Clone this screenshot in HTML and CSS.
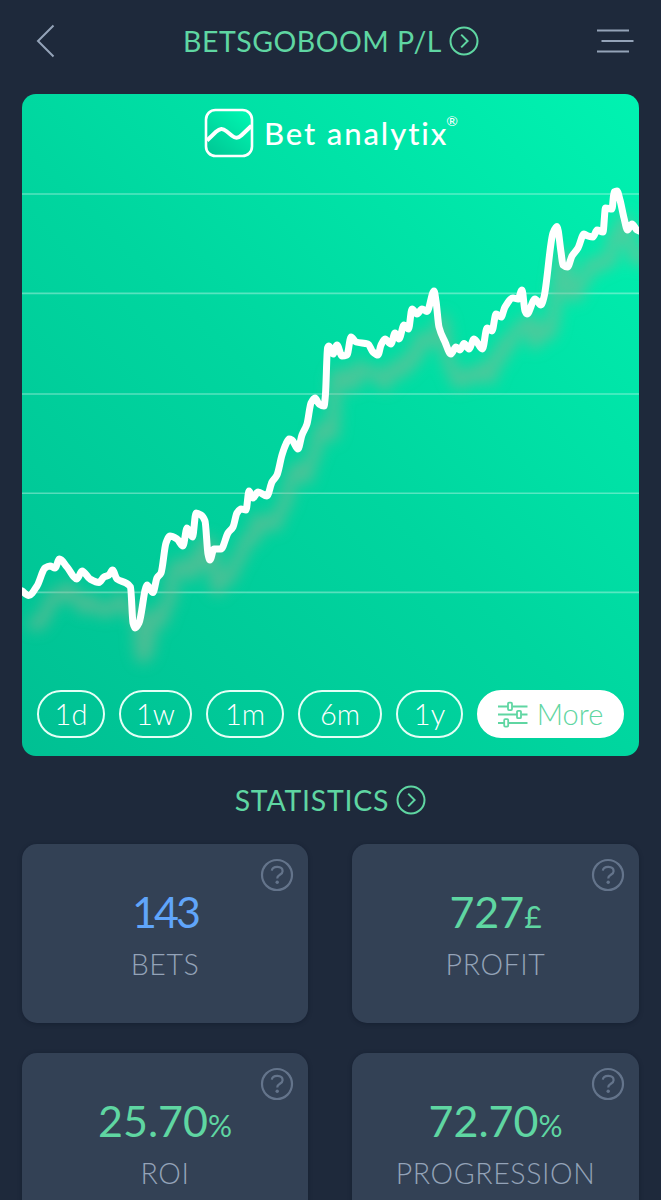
FILE: index.html
```html
<!DOCTYPE html>
<html lang="en">
<head>
  <meta charset="UTF-8" />
  <meta name="viewport" content="width=device-width, initial-scale=1.0" />
  <title>Bet analytix</title>
  <link rel="stylesheet" href="styles.css">
</head>
<body>
  <!-- Top bar -->
  <header class="top-bar">
    <svg class="back" width="20" height="36" viewBox="0 0 20 36"><path d="M17.5 2.5 L2 18 L17.5 33.5" /></svg>
    <h1 class="title">
      <span class="title-text">BETSGOBOOM P/L</span>
      <svg class="go" width="30" height="30" viewBox="0 0 30 30"><circle cx="15" cy="15" r="13.5" /><path d="M12.2 8.6 L18.6 15 L12.2 21.4" /></svg>
    </h1>
    <svg class="menu" width="38" height="26" viewBox="0 0 38 26"><path d="M1 2.5 H33 M5.5 13 H37.5 M1 23.5 H33" /></svg>
  </header>

  <!-- Profit chart -->
  <section class="chart-card">
    <svg class="chart" width="617" height="662" viewBox="0 0 617 662">
      <defs>
        <filter id="soft" x="-10%" y="-10%" width="120%" height="120%">
          <feGaussianBlur stdDeviation="7" />
        </filter>
      </defs>
      <path class="grid-line" d="M0 100 H617 M0 199.4 H617 M0 300 H617 M0 399.2 H617 M0 498.4 H617" />
      <path class="line-shadow" id="lineShadow" filter="url(#soft)" />
      <path class="line" id="line" />
    </svg>
    <div class="brand">
      <svg class="brand-icon" width="50" height="50" viewBox="0 0 50 50">
        <defs>
          <linearGradient id="logoFill" x1="0" y1="1" x2="0.8" y2="0">
            <stop offset="0" stop-color="#00c493" />
            <stop offset="1" stop-color="#00f5b0" />
          </linearGradient>
        </defs>
        <rect x="2" y="2" width="46" height="46" rx="9.5" fill="url(#logoFill)" />
        <path d="M3 32.5 L12 23.8 C16 20.3 18.5 20 22.5 23.2 L28 27.8 C31.5 30.6 34 30.6 37.5 27.3 L47.5 17.8" />
      </svg>
      <span class="brand-name">Bet analytix</span>
      <span class="brand-mark">®</span>
    </div>
    <nav class="ranges">
      <button class="range">1d</button>
      <button class="range">1w</button>
      <button class="range">1m</button>
      <button class="range">6m</button>
      <button class="range">1y</button>
      <button class="range more">
        <svg width="30" height="27" viewBox="0 0 30 27">
          <path d="M0 5.5 H10 M14.5 5.5 H29.5 M0 13.5 H19 M23.5 13.5 H29.5 M0 22 H6 M10.5 22 H29.5" />
          <rect x="10" y="1.7" width="4" height="7.4" rx="1" />
          <rect x="19" y="9.8" width="4" height="7.4" rx="1" />
          <rect x="6.2" y="18.2" width="4" height="7.4" rx="1" />
        </svg>
        <span>More</span>
      </button>
    </nav>
  </section>

  <!-- Statistics -->
  <h2 class="title stats-title">
    <span class="title-text">STATISTICS</span>
    <svg class="go" width="30" height="30" viewBox="0 0 30 30"><circle cx="15" cy="15" r="13.5" /><path d="M12.2 8.6 L18.6 15 L12.2 21.4" /></svg>
  </h2>
  <section class="stats">
    <div class="stat">
      <svg class="help" width="34" height="34" viewBox="0 0 34 34"><circle cx="17" cy="17" r="15" /><path d="M11.8 12.7 C12.5 7.6 22.6 7.6 22.6 13.2 C22.6 17 17.2 16.6 17.2 20.4" /><circle class="dot" cx="17.2" cy="24.2" r="1.7" /></svg>
      <div class="value blue">143</div>
      <div class="label">BETS</div>
    </div>
    <div class="stat">
      <svg class="help" width="34" height="34" viewBox="0 0 34 34"><circle cx="17" cy="17" r="15" /><path d="M11.8 12.7 C12.5 7.6 22.6 7.6 22.6 13.2 C22.6 17 17.2 16.6 17.2 20.4" /><circle class="dot" cx="17.2" cy="24.2" r="1.7" /></svg>
      <div class="value">727<span class="unit">£</span></div>
      <div class="label">PROFIT</div>
    </div>
    <div class="stat">
      <svg class="help" width="34" height="34" viewBox="0 0 34 34"><circle cx="17" cy="17" r="15" /><path d="M11.8 12.7 C12.5 7.6 22.6 7.6 22.6 13.2 C22.6 17 17.2 16.6 17.2 20.4" /><circle class="dot" cx="17.2" cy="24.2" r="1.7" /></svg>
      <div class="value">25.70<span class="unit">%</span></div>
      <div class="label">ROI</div>
    </div>
    <div class="stat">
      <svg class="help" width="34" height="34" viewBox="0 0 34 34"><circle cx="17" cy="17" r="15" /><path d="M11.8 12.7 C12.5 7.6 22.6 7.6 22.6 13.2 C22.6 17 17.2 16.6 17.2 20.4" /><circle class="dot" cx="17.2" cy="24.2" r="1.7" /></svg>
      <div class="value">72.70<span class="unit">%</span></div>
      <div class="label">PROGRESSION</div>
    </div>
  </section>
  <script src="chart.js"></script>
</body>
</html>
```
FILE: styles.css
```css
:root {
  --background: #1e293b;
  --card: #334155;
  --green: #5fd6a2;
  --blue: #60a5fa;
  --muted: #94a3b8;
}
* {
  margin: 0;
  padding: 0;
  box-sizing: border-box;
  font-family: Lato, 'Liberation Sans', sans-serif;
}
body {
  height: 1200px;
  background: var(--background);
  overflow: hidden;
}
svg {
  display: block;
  fill: none;
  flex-shrink: 0;
}
/* Top bar */
.top-bar {
  height: 94px;
  padding: 0 27px 12px 36px;
  display: flex;
  align-items: center;
  justify-content: space-between;
}
.back path,
.menu path {
  stroke: var(--muted);
  stroke-width: 2;
}
.title {
  display: flex;
  align-items: center;
  justify-content: center;
  gap: 7px;
  color: var(--green);
  font-size: 28.5px;
  font-weight: 400;
  line-height: 36px;
  white-space: nowrap;
}
.top-bar .title {
  margin-left: 10px;
}
.top-bar .title-text {
  letter-spacing: 0.5px;
}
.stats-title .title-text {
  letter-spacing: 0.75px;
}
.go {
  stroke: var(--green);
  stroke-width: 2;
}
/* Chart card */
.chart-card {
  position: relative;
  height: 662px;
  margin: 0 22px;
  border-radius: 14px;
  background: linear-gradient(45deg, #00c093, #00d69f 48%, #00f3b1);
  overflow: hidden;
  display: flex;
  flex-direction: column;
  justify-content: space-between;
}
/* the plot fills the card behind the logo and the buttons */
.chart {
  position: absolute;
  top: 0;
  left: 0;
}
.grid-line {
  stroke: rgba(255, 255, 255, 0.34);
  stroke-width: 1.6;
}
.line {
  stroke: #fff;
  stroke-width: 7;
  stroke-linejoin: round;
  stroke-linecap: round;
}
.line-shadow {
  stroke: rgba(140, 180, 145, 0.52);
  stroke-width: 13;
  stroke-linejoin: round;
  transform: translate(8px, 29px);
}
.brand {
  position: relative;
  display: flex;
  align-items: center;
  margin: 14px 0 0 182px;
  color: #fff;
}
.brand-icon {
  stroke: #fff;
  stroke-width: 2.6;
}
.brand-icon path {
  stroke-width: 4;
}
.brand-name {
  margin-left: 10px;
  font-size: 31px;
  font-weight: 500;
  line-height: 50px;
  letter-spacing: 1.9px;
}
.brand-mark {
  align-self: flex-start;
  margin: 4px 0 0 -2px;
  font-size: 14px;
  line-height: 18px;
}
/* Range buttons */
.ranges {
  position: relative;
  display: grid;
  grid-template-columns: 68px 73px 78px 84px 67px 147px;
  justify-content: space-between;
  padding: 0 15px 18px;
}
.range {
  display: flex;
  align-items: center;
  justify-content: center;
  height: 48px;
  border: 2px solid #e4fff6;
  border-radius: 24px;
  background: transparent;
  color: #fff;
  font-size: 29px;
  font-weight: 300;
  line-height: 40px;
}
.more {
  gap: 9px;
  background: #fff;
  border-color: #fff;
  color: var(--green);
}
.more svg {
  stroke: var(--green);
  stroke-width: 1.8;
}
/* Statistics */
.stats-title {
  height: 88px;
}
.stats {
  display: grid;
  grid-template-columns: 286px 287px;
  gap: 30px 44px;
  padding: 0 22px;
}
.stat {
  position: relative;
  height: 179px;
  padding-top: 43px;
  border-radius: 15px;
  background: var(--card);
  box-shadow: 0 1px 4px rgba(10, 18, 32, 0.35);
  text-align: center;
}
.help {
  position: absolute;
  top: 14px;
  right: 14px;
  stroke: #64748b;
  stroke-width: 2.2;
}
.help .dot {
  fill: #64748b;
  stroke: none;
}
.value {
  height: 50px;
  color: var(--green);
  font-size: 43px;
  font-weight: 400;
  line-height: 50px;
}
.value.blue {
  color: var(--blue);
  letter-spacing: -3px;
}
.unit {
  font-size: 30px;
}
.label {
  margin-top: 8px;
  color: var(--muted);
  font-size: 28.5px;
  font-weight: 300;
  line-height: 38px;
  letter-spacing: 0.6px;
}
```
FILE: chart.js
```js
// bankroll curve, in chart pixels
const points = [
  [0, 497], [6.7, 501.5], [15, 492], [23, 474], [28, 472], [33, 474], [37.5, 465], [45, 473], [55, 485],
  [60, 477], [68, 485], [77, 488.5], [82, 483], [87, 481], [90.5, 476], [95, 485], [104, 489], [108.5, 493],
  [111, 529], [113, 534], [117, 529], [125, 491], [131, 498.5], [135, 484], [139, 479], [144, 449], [148, 442],
  [155, 445], [161, 452], [165, 434], [170.5, 443], [174, 419], [179, 421], [183, 427], [186, 460], [188, 466],
  [192, 455], [199, 455], [206, 439], [211, 433], [215, 419], [219, 415], [224, 416], [227, 397], [231, 404],
  [236, 398], [245, 402], [250, 388], [255, 381], [260, 361], [264, 350], [267, 345], [270, 346], [276, 355],
  [280, 341], [285, 330], [289, 309], [293, 304], [297, 310], [302, 312], [303.5, 300], [305.5, 254],
  [307, 252], [311, 260], [315, 251], [320, 262], [325, 261], [329, 243], [334, 248], [346, 250], [351, 258],
  [356, 261], [359, 251], [363, 245], [369, 250], [373, 239], [377, 245], [382, 231], [386.5, 235], [390, 215],
  [395, 220], [400, 215], [405, 217.5], [412, 197], [414, 207], [417, 233], [423, 248], [429, 260], [434, 253],
  [438, 256], [442, 249.5], [447, 255], [452, 245], [460.5, 255], [465, 234], [470, 237], [474, 220], [479, 223],
  [483, 213], [491, 204], [496, 205], [500, 196], [503, 217], [505, 220], [513, 205], [519, 211], [522, 203],
  [531, 139], [535, 132.5], [539, 158], [541, 171], [545.5, 173], [550, 162], [556, 154], [562, 140], [566, 142],
  [571, 143], [575, 136], [581, 138], [583.5, 114], [590, 115], [592, 98], [595, 97], [598, 106], [602, 124],
  [605.5, 136], [610, 130], [615, 136], [620, 138]
];

// monotone cubic interpolation, so peaks stay on the data points
function smoothPath(pts) {
  const n = pts.length;
  const slope = [];
  for (let i = 0; i < n - 1; i++) {
    slope.push((pts[i + 1][1] - pts[i][1]) / (pts[i + 1][0] - pts[i][0]));
  }
  const tan = [slope[0]];
  for (let i = 1; i < n - 1; i++) {
    const a = slope[i - 1];
    const b = slope[i];
    tan.push(a * b <= 0 ? 0 : (2 * a * b) / (a + b));
  }
  tan.push(slope[n - 2]);
  let d = `M${pts[0][0]} ${pts[0][1]}`;
  for (let i = 0; i < n - 1; i++) {
    const [x0, y0] = pts[i];
    const [x1, y1] = pts[i + 1];
    const h = (x1 - x0) / 3;
    d += ` C${x0 + h} ${y0 + tan[i] * h} ${x1 - h} ${y1 - tan[i + 1] * h} ${x1} ${y1}`;
  }
  return d;
}

const path = smoothPath(points);
document.getElementById('line').setAttribute('d', path);
document.getElementById('lineShadow').setAttribute('d', path);
```
